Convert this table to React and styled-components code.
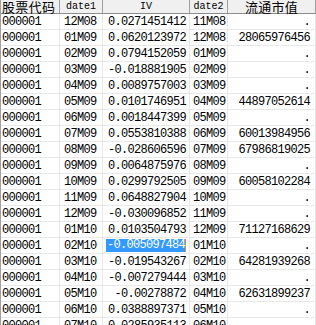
import React from 'react';
import styled, { createGlobalStyle } from "styled-components";

const GlobalStyle = createGlobalStyle`
    html, body {
        margin: 0;
        padding: 0;
        background: #ffffff;
        overflow: hidden;
    }
`;

const COLS = "59px 43px 87px 38px 88px";

const rows = [
    ["000001", "12M08", "0.0271451412", "11M08", "."],
    ["000001", "01M09", "0.0620123972", "12M08", "28065976456"],
    ["000001", "02M09", "0.0794152059", "01M09", "."],
    ["000001", "03M09", "-0.018881905", "02M09", "."],
    ["000001", "04M09", "0.0089757003", "03M09", "."],
    ["000001", "05M09", "0.0101746951", "04M09", "44897052614"],
    ["000001", "06M09", "0.0018447399", "05M09", "."],
    ["000001", "07M09", "0.0553810388", "06M09", "60013984956"],
    ["000001", "08M09", "-0.028606596", "07M09", "67986819025"],
    ["000001", "09M09", "0.0064875976", "08M09", "."],
    ["000001", "10M09", "0.0299792505", "09M09", "60058102284"],
    ["000001", "11M09", "0.0648827904", "10M09", "."],
    ["000001", "12M09", "-0.030096852", "11M09", "."],
    ["000001", "01M10", "0.0103504793", "12M09", "71127168629"],
    ["000001", "02M10", "-0.005097484", "01M10", ".", true],
    ["000001", "03M10", "-0.019543267", "02M10", "64281939268"],
    ["000001", "04M10", "-0.007279444", "03M10", "."],
    ["000001", "05M10", "-0.00278872", "04M10", "62631899237"],
    ["000001", "06M10", "0.0388897371", "05M10", "."],
    ["000001", "07M10", "0.0285935113", "06M10", "."],
];

const Sheet = styled.div`
    width: 315px;
    height: 325px;
    overflow: hidden;
    border-left: 1px solid #a0a0a0;
    background: #fff;
`;

const HeaderRow = styled.div`
    display: grid;
    grid-template-columns: ${COLS};
    height: 14px;
    background: #f0f0f0;
    border-bottom: 1px solid #8c8c8c;
    box-sizing: border-box;
`;

const HeadCell = styled.div`
    height: 13px;
    border-right: 1px solid #a0a0a0;
    display: flex;
    align-items: center;
    justify-content: ${p => p.$left ? "flex-start" : "center"};
    padding-left: ${p => p.$left ? "1px" : "0"};
    white-space: nowrap;
    color: #000;
    font-family: ${p => p.$cjk ? '"Noto Sans CJK SC", sans-serif' : '"Liberation Mono", monospace'};
    font-size: ${p => p.$cjk ? "13px" : "10px"};
    letter-spacing: ${p => p.$cjk ? "0.3px" : "0"};
    line-height: 13px;
`;

const Row = styled.div`
    display: grid;
    grid-template-columns: ${COLS};
    height: 16px;
`;

const Cell = styled.div`
    box-sizing: border-box;
    height: 16px;
    border-right: 1px solid #e8e8e8;
    border-bottom: 1px solid #e8e8e8;
    display: flex;
    align-items: center;
    justify-content: ${p => p.$right ? "flex-end" : "flex-start"};
    padding: ${p => p.$pad};
    white-space: nowrap;
    overflow: hidden;
    font-family: "Liberation Mono", monospace;
    font-size: 12px;
    letter-spacing: -0.7px;
    color: #000;
`;

const Selected = styled.span`
    background: #3399ff;
    color: #fff;
    height: 13px;
    line-height: 13px;
    padding-left: 1px;
    border-right: 1px solid #e8891c;
`;

export default function App() {
    return (
        <Sheet>
            <GlobalStyle/>
            <HeaderRow>
                <HeadCell $cjk $left>股票代码</HeadCell>
                <HeadCell>date1</HeadCell>
                <HeadCell>IV</HeadCell>
                <HeadCell>date2</HeadCell>
                <HeadCell $cjk>流通市值</HeadCell>
            </HeaderRow>
            {rows.map((r, i) => (
                <Row key={i}>
                    <Cell $pad="0 0 0 1px">{r[0]}</Cell>
                    <Cell $pad="0 0 0 4px">{r[1]}</Cell>
                    <Cell $right $pad="0 3px 0 0">
                        {r[5] ? <Selected>{r[2]}</Selected> : r[2]}
                    </Cell>
                    <Cell $pad="0 0 0 3px">{r[3]}</Cell>
                    <Cell $right $pad="0 5px 0 0">{r[4]}</Cell>
                </Row>
            ))}
        </Sheet>
    );
}
